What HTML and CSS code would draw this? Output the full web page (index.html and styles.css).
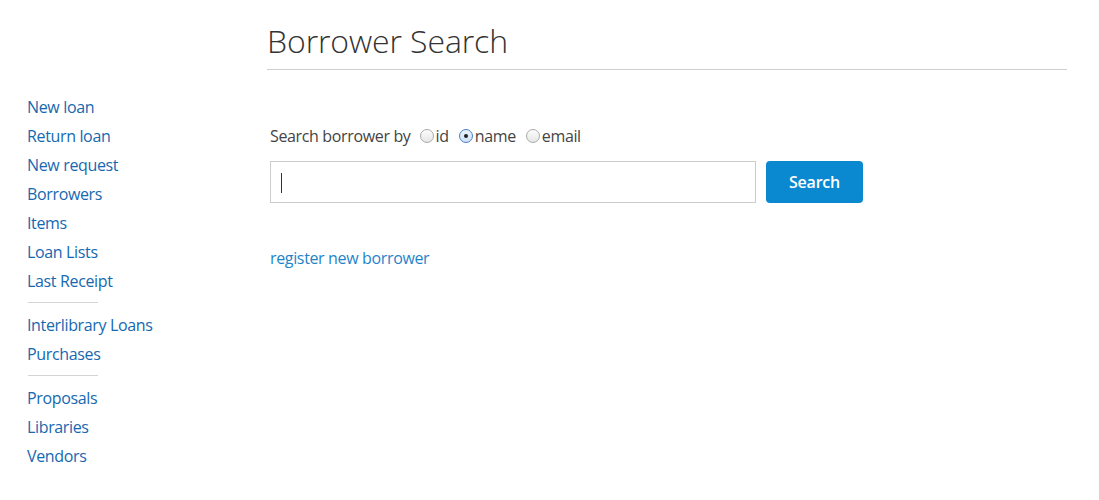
FILE: index.html
```html
<!DOCTYPE html>
<html lang="en">
<head>
<meta charset="utf-8">
<title>Borrower Search</title>
<link rel="stylesheet" href="styles.css">
</head>
<body>
<div class="page">
  <nav class="sidebar">
    <ul class="nav-group">
      <li><a href="#">New loan</a></li>
      <li><a href="#">Return loan</a></li>
      <li><a href="#">New request</a></li>
      <li><a href="#">Borrowers</a></li>
      <li><a href="#">Items</a></li>
      <li><a href="#">Loan Lists</a></li>
      <li><a href="#">Last Receipt</a></li>
    </ul>
    <hr class="nav-sep">
    <ul class="nav-group">
      <li><a href="#">Interlibrary Loans</a></li>
      <li><a href="#">Purchases</a></li>
    </ul>
    <hr class="nav-sep">
    <ul class="nav-group">
      <li><a href="#">Proposals</a></li>
      <li><a href="#">Libraries</a></li>
      <li><a href="#">Vendors</a></li>
    </ul>
  </nav>
  <main class="main">
    <h1 class="title">Borrower Search</h1>
    <div class="content">
      <div class="search-by">
        <span class="label">Search borrower by</span>
        <label class="opt"><span class="radio"></span>id</label>
        <label class="opt"><span class="radio checked"></span>name</label>
        <label class="opt"><span class="radio"></span>email</label>
      </div>
      <form class="search-row" onsubmit="return false">
        <div class="field">
          <input class="search-input" type="text" aria-label="search">
          <span class="caret"></span>
        </div>
        <button class="btn" type="submit">Search</button>
      </form>
      <a class="register" href="#">register new borrower</a>
    </div>
  </main>
</div>
</body>
</html>
```

FILE: styles.css
```css
* { box-sizing: border-box; }
html, body {
  margin: 0;
  padding: 0;
  background: #fff;
  font-family: "Open Sans", "Liberation Sans", sans-serif;
  font-size: 16px;
  letter-spacing: -0.35px;
  color: #333;
}
a { text-decoration: none; }

.page {
  display: flex;
  align-items: flex-start;
}

.sidebar {
  width: 267px;
  flex: none;
  padding: 93px 0 0 27px;
}
.nav-group {
  list-style: none;
  margin: 0;
  padding: 0;
}
.nav-group li {
  line-height: 29px;
  height: 29px;
}
.nav-group a {
  color: #1668b0;
  font-size: 16px;
}
.nav-sep {
  width: 70px;
  margin: 6px 0 8px 1px;
  border: 0;
  height: 1px;
  background: #d4d4d4;
}

.main {
  width: 800px;
  flex: none;
}
.title {
  margin: 0;
  padding: 21px 0 8px 0;
  font-weight: 300;
  font-size: 32px;
  line-height: 40px;
  letter-spacing: -0.1px;
  color: #333;
  border-bottom: 1px solid #cfcfcf;
}
.content {
  padding: 54px 0 0 3px;
}
.search-by {
  display: flex;
  align-items: center;
  height: 24px;
  line-height: 24px;
  color: #444;
}
.label { margin-right: 9px; }
.opt {
  display: flex;
  align-items: center;
  margin-right: 10px;
}
.radio {
  width: 14px;
  height: 14px;
  border-radius: 50%;
  border: 1px solid #a9a9a9;
  background: linear-gradient(#fdfdfd, #e6e6e6);
  margin-right: 2px;
  position: relative;
}
.radio.checked {
  border-color: #4a7fc4;
  background: linear-gradient(#eaf3fd, #cfe2f8);
}
.radio.checked::after {
  content: "";
  position: absolute;
  left: 4px;
  top: 4px;
  width: 4px;
  height: 4px;
  border-radius: 50%;
  background: #222;
}

.search-row {
  display: flex;
  gap: 10px;
  margin: 13px 0 0 0;
}
.field {
  position: relative;
  width: 486px;
  height: 42px;
}
.search-input {
  width: 100%;
  height: 100%;
  border: 1px solid #cccccc;
  border-radius: 0;
  padding: 0 12px;
  font: inherit;
  outline: none;
}
.caret {
  position: absolute;
  left: 11px;
  top: 12px;
  width: 1px;
  height: 20px;
  background: #333;
}
.btn {
  width: 97px;
  height: 42px;
  border: 0;
  border-radius: 4px;
  background: #0a88d0;
  color: #fff;
  font-family: inherit;
  font-size: 16px;
  font-weight: 600;
  letter-spacing: -0.2px;
  cursor: pointer;
}
.register {
  display: inline-block;
  margin-top: 43px;
  line-height: 24px;
  color: #1f84c9;
}
```
